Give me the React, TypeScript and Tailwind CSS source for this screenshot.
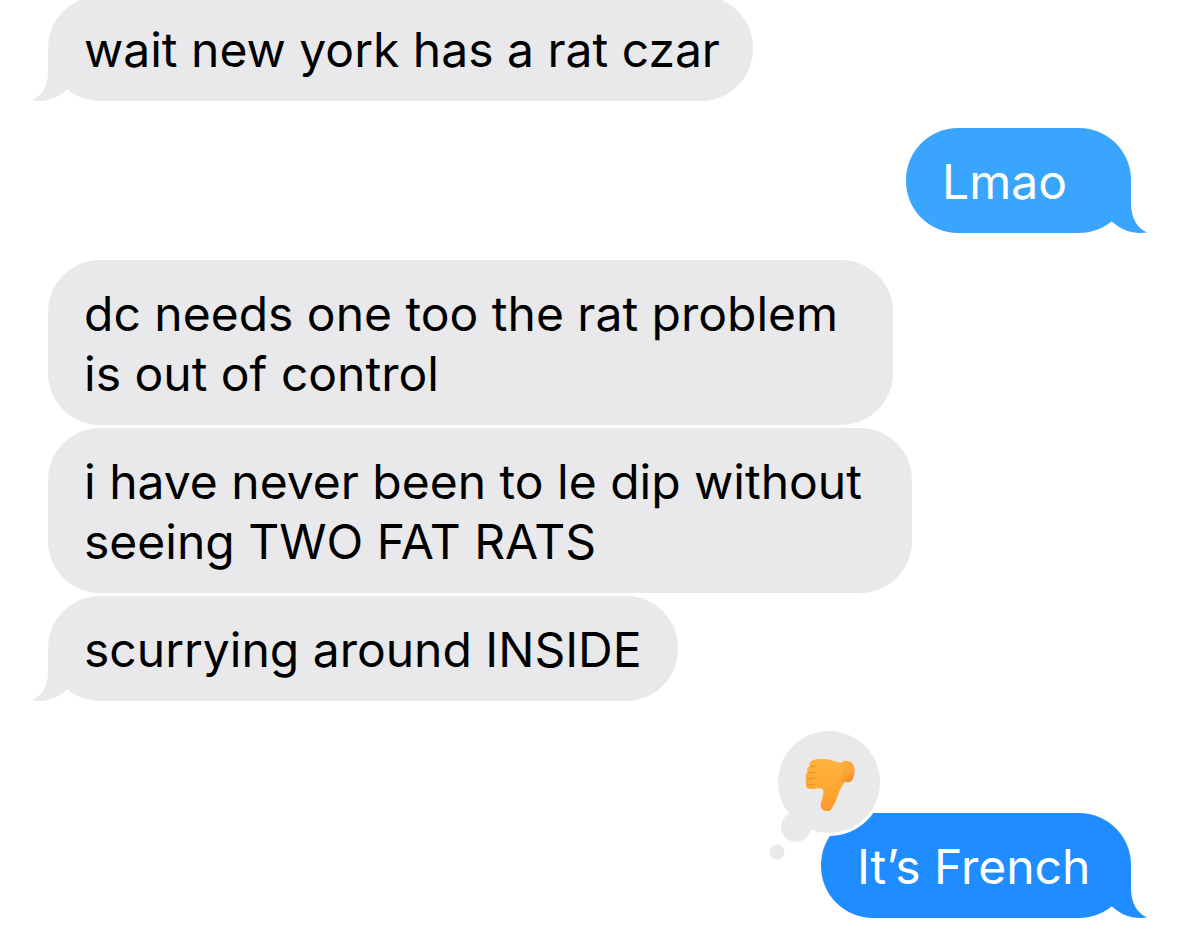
import clsx from "clsx";

type Side = "in" | "out";

interface Message {
  id: number;
  side: Side;
  text: string;
  tail?: boolean;
  reaction?: boolean;
  // bubble colours and size
  color: string;
  width: string;
  gap: string;
}

const MESSAGES: Message[] = [
  { id: 1, side: "in", text: "wait new york has a rat czar", tail: true, color: "bg-[#e9e9eb] text-[#e9e9eb]", width: "w-[705px]", gap: "-mt-1" },
  { id: 2, side: "out", text: "Lmao", tail: true, color: "bg-[#39a5ff] text-[#39a5ff]", width: "w-[225px]", gap: "mt-[27px]" },
  { id: 3, side: "in", text: "dc needs one too the rat problem is out of control", color: "bg-[#e9e9eb] text-[#e9e9eb]", width: "w-[845px]", gap: "mt-[27px]" },
  { id: 4, side: "in", text: "i have never been to le dip without seeing TWO FAT RATS", color: "bg-[#e9e9eb] text-[#e9e9eb]", width: "w-[864px]", gap: "mt-[3px]" },
  { id: 5, side: "in", text: "scurrying around INSIDE", tail: true, color: "bg-[#e9e9eb] text-[#e9e9eb]", width: "w-[630px]", gap: "mt-[3px]" },
  { id: 6, side: "out", text: "It’s French", tail: true, reaction: true, color: "bg-[#1f8dff] text-[#1f8dff]", width: "w-[310px]", gap: "mt-28" },
];

function Tail({ side }: { side: Side }) {
  return (
    <svg
      viewBox="0 0 40 52"
      aria-hidden="true"
      className={clsx("absolute bottom-0 h-[52px] w-10", side === "in" ? "-left-4" : "-right-4 -scale-x-100")}
    >
      <path fill="currentColor" d="M16 0V22C16 37 10 47 0 51.5C14 53.5 26 49 35 40.5L40 30Z" />
    </svg>
  );
}

function Reaction() {
  return (
    <svg
      viewBox="0 0 120 140"
      role="img"
      aria-label="Thumbs down"
      className="absolute -top-[88px] -left-[57px] h-[140px] w-[120px]"
    >
      <defs>
        <linearGradient id="skin" x1="0" y1="0" x2="0" y2="1">
          <stop offset="0" stopColor="#ffb540" />
          <stop offset="0.55" stopColor="#ffa731" />
          <stop offset="1" stopColor="#fc9a2c" />
        </linearGradient>
        <linearGradient id="wrist" x1="0" y1="0" x2="0.4" y2="1">
          <stop offset="0" stopColor="#ffb03c" />
          <stop offset="0.7" stopColor="#fda335" />
          <stop offset="1" stopColor="#f4902a" />
        </linearGradient>
      </defs>
      <circle cx="65" cy="57" r="54" fill="#fff" />
      <circle cx="65" cy="57" r="51" fill="#e9e9e9" />
      <circle cx="32" cy="102" r="15" fill="#e9e9e9" />
      <circle cx="13" cy="127" r="7.5" fill="#e9e9e9" />
      <path
        fill="url(#skin)"
        d="M46 37.5C47 34.5 54 33.5 60 34C67 34 73 37.5 79 38L83 55C79 58 76 64 74 70C72 76 70 80 68 83C66 88 58 86.500 57 82C55.500 77 61 71 59 64.500C55 62 52 64 47 64C43 64 41 62 42.500 59C41 57 41 55 42.500 53C41 50 42 48 44 47C42 44 43.500 41 46 41.500C45 40 45 38.500 46 37.500Z"
      />
      <path fill="url(#wrist)" d="M76 39C79 34 87 35 89 39.500C91.500 44 91 51 88 55.500C86 58 80 58 77 54.500C79 50 79 44 76 39Z" />
      <path
        fill="none"
        stroke="#f08c22"
        strokeWidth="1"
        strokeLinecap="round"
        strokeLinejoin="round"
        d="M46 41.500C48 42 50 41.500 52 40M44 47.200C47 48.500 49 48 51 47M43 53.200C46 54.500 49 54 51 53M43 59.200C46 60.500 49 60 51 59"
      />
    </svg>
  );
}

function Bubble({ message }: { message: Message }) {
  const { side, text, tail, reaction, color, width, gap } = message;
  return (
    <li className={clsx("flex", side === "out" && "justify-end", gap)}>
      <div className={clsx("relative max-w-full rounded-[52px] pt-6 pr-8 pb-[21px] pl-9", color, width)}>
        {tail && <Tail side={side} />}
        <p className={clsx("relative", side === "in" ? "text-black" : "text-white")}>{text}</p>
        {reaction && <Reaction />}
      </div>
    </li>
  );
}

export default function App() {
  return (
    <main className="overflow-hidden bg-white pb-5 font-['Inter','Liberation_Sans',sans-serif] text-[48px] leading-[60px]">
      <ul className="px-12">
        {MESSAGES.map((m) => (
          <Bubble key={m.id} message={m} />
        ))}
      </ul>
    </main>
  );
}
